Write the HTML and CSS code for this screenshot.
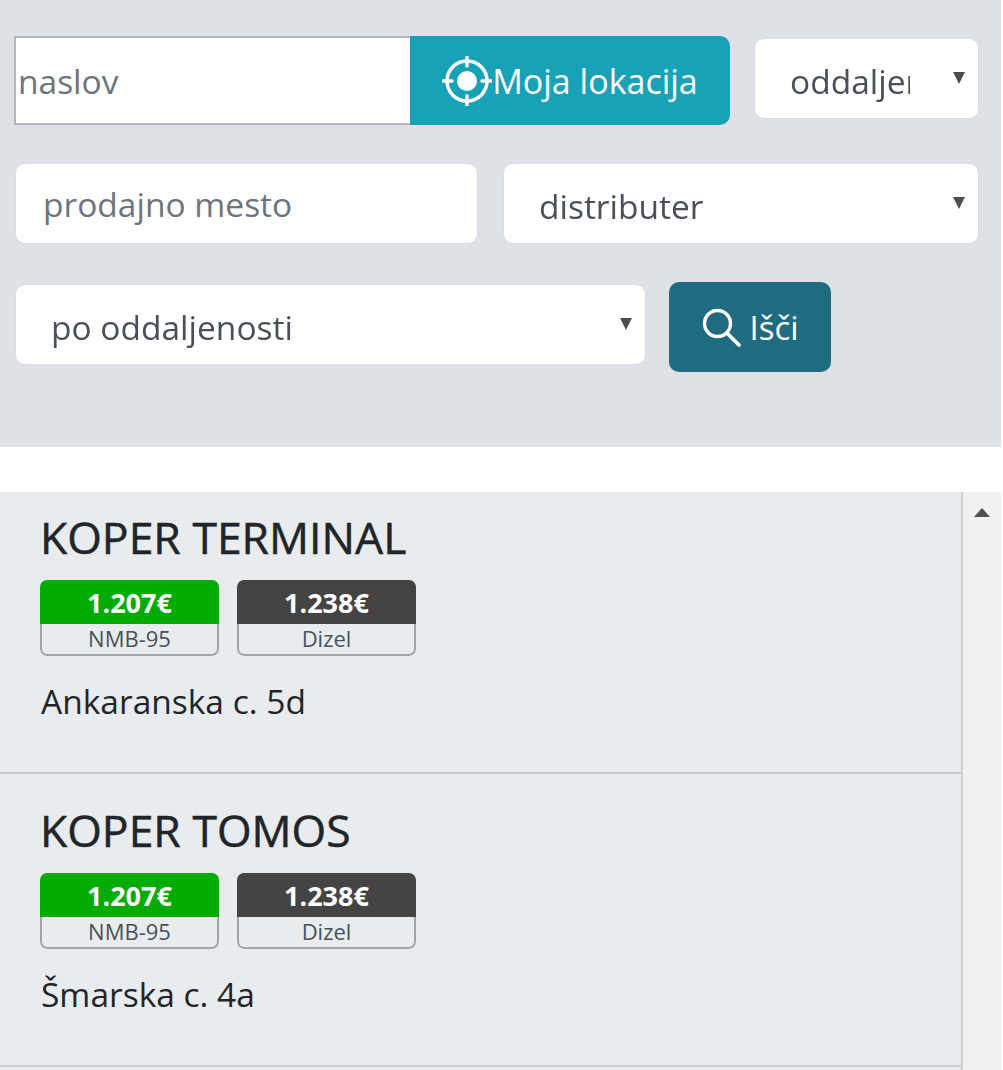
FILE: index.html
```html
<!DOCTYPE html>
<html lang="sl">
<head>
  <meta charset="UTF-8">
  <meta name="viewport" content="width=device-width, initial-scale=1.0">
  <title>Prodajna mesta</title>
  <link rel="stylesheet" href="styles.css">
</head>
<body>
  <form class="filters">
    <div class="filter-row row-address">
      <div class="address-group">
        <input class="address-input" type="text" placeholder="naslov">
        <button class="location-button" type="button">
          <svg class="location-icon" viewBox="0 0 50 50" width="50" height="50">
            <circle cx="25" cy="25" r="20" fill="none" stroke="#fff" stroke-width="3.5"/>
            <circle cx="25" cy="25" r="10" fill="#fff"/>
            <path d="M25 1v9M25 40v9M1 25h9M40 25h9" stroke="#fff" stroke-width="3.5" stroke-linecap="round"/>
          </svg>
          <span>Moja lokacija</span>
        </button>
      </div>
      <div class="select-wrap select-distance">
        <select class="field"><option>oddaljenost</option></select>
      </div>
    </div>

    <div class="filter-row row-place">
      <input class="field place-input" type="text" placeholder="prodajno mesto">
      <div class="select-wrap select-dealer">
        <select class="field"><option>distributer</option></select>
      </div>
    </div>

    <div class="filter-row row-sort">
      <div class="select-wrap select-sort">
        <select class="field"><option>po oddaljenosti</option></select>
      </div>
      <button class="search-button" type="submit">
        <svg viewBox="0 0 40 40" width="40" height="40">
          <circle cx="16.5" cy="16.5" r="13" fill="none" stroke="#fff" stroke-width="3.4"/>
          <path d="M26 26l12 12" stroke="#fff" stroke-width="3.8" stroke-linecap="round"/>
        </svg>
        <span>Išči</span>
      </button>
    </div>
  </form>

  <div class="results">
    <div class="station-list">
      <div class="station">
        <h2>KOPER TERMINAL</h2>
        <div class="prices">
          <div class="price price-petrol"><b>1.207€</b><span>NMB-95</span></div>
          <div class="price price-diesel"><b>1.238€</b><span>Dizel</span></div>
        </div>
        <p>Ankaranska c. 5d</p>
      </div>
      <div class="station">
        <h2>KOPER TOMOS</h2>
        <div class="prices">
          <div class="price price-petrol"><b>1.207€</b><span>NMB-95</span></div>
          <div class="price price-diesel"><b>1.238€</b><span>Dizel</span></div>
        </div>
        <p>Šmarska c. 4a</p>
      </div>
    </div>
    <div class="scrollbar"><div class="scroll-up"></div></div>
  </div>
</body>
</html>
```

FILE: styles.css
```css
:root {
  --panel: #dee2e6;
  --list: #e9ecef;
  --text: #212529;
  --muted: #495057;
  --placeholder: #6c757d;
}

* {
  box-sizing: border-box;
}

html, body {
  height: 100%;
}

body {
  margin: 0;
  background: #fff;
  color: var(--text);
  font-family: "Open Sans", "Noto Sans", sans-serif;
  overflow: hidden;
  filter: blur(0.5px);
}

.filters {
  width: 1001px;
  height: 447px;
  padding: 36px 22px 0 14px;
  background: var(--panel);
}

.filter-row {
  display: flex;
}

.row-address {
  align-items: flex-start;
  gap: 24px;
  height: 89px;
}

.row-place {
  gap: 25px;
  height: 81px;
  margin-top: 38px;
  padding-left: 1px;
}

.row-sort {
  align-items: flex-start;
  gap: 23px;
  margin-top: 40px;
  padding-left: 1px;
}

.address-group {
  display: flex;
  width: 716px;
  height: 89px;
}

.address-input {
  width: 396px;
  height: 100%;
  padding: 0 2px;
  border: 2px solid #b4b6b8;
  border-right: 0;
  background: #fff;
  color: var(--muted);
  font: inherit;
  font-size: 33.5px;
}

.location-button {
  display: flex;
  align-items: center;
  justify-content: center;
  width: 320px;
  height: 100%;
  padding: 0;
  border: 0;
  border-radius: 0 10px 10px 0;
  background: #17a2b8;
  color: #fff;
  font: inherit;
  font-size: 34px;
}

.location-icon {
  flex: none;
}

.field {
  width: 100%;
  height: 81px;
  border: 1px solid #d8dce0;
  border-radius: 10px;
  background: #fff;
  color: var(--muted);
  font: inherit;
  font-size: 33.5px;
  appearance: none;
}

input.field {
  padding: 0 27px;
}

select.field {
  padding: 4px 68px 0 35px;
}

input::placeholder {
  color: var(--placeholder);
  opacity: 1;
}

.place-input {
  width: 463px;
}

.select-wrap {
  position: relative;
}

.select-wrap::after {
  content: "";
  position: absolute;
  top: 34px;
  right: 14px;
  border: 6.5px solid transparent;
  border-top: 12px solid #4a4f54;
  border-bottom: 0;
}

.select-distance {
  width: 225px;
  margin-top: 2px;
}

.select-dealer {
  width: 476px;
}

.select-sort {
  width: 631px;
}

.search-button {
  display: flex;
  align-items: center;
  justify-content: center;
  gap: 8px;
  width: 162px;
  height: 90px;
  margin-top: -2px;
  padding: 0;
  border: 0;
  border-radius: 10px;
  background: #1f6b7f;
  color: #fff;
  font: inherit;
  font-size: 33px;
}

.results {
  display: flex;
  width: 1001px;
  height: 578px;
  margin-top: 45px;
  overflow: hidden;
}

.station-list {
  width: 961px;
  background: var(--list);
}

.station {
  height: 293px;
  padding: 27px 40px 0;
  border-bottom: 2px solid #c9cdd1;
}

.station:first-child {
  height: 282px;
  padding-top: 16px;
}

.station h2 {
  margin: 0;
  font-size: 44.5px;
  font-weight: 400;
  line-height: 58px;
  -webkit-text-stroke: 0.5px var(--text);
}

.prices {
  display: flex;
  gap: 18px;
  margin-top: 14px;
}

.price {
  width: 179px;
  height: 76px;
  border-radius: 7px;
  overflow: hidden;
  text-align: center;
}

.price b {
  display: block;
  height: 44px;
  color: #fff;
  font-size: 27px;
  line-height: 45px;
}

.price span {
  display: block;
  height: 32px;
  border: 2px solid #a2a5a8;
  border-top: 0;
  border-radius: 0 0 7px 7px;
  color: var(--muted);
  font-size: 22px;
  line-height: 29px;
}

.price-petrol b {
  background: #00ac00;
}

.price-diesel b {
  background: #444;
}

.station p {
  margin: 23px 0 0 1px;
  color: var(--text);
  font-size: 33.5px;
  line-height: 44px;
}

.scrollbar {
  width: 40px;
  border-left: 2px solid #cdcfd1;
  background: #f1f1f1;
}

.scroll-up {
  width: 0;
  margin: 16px 0 0 11px;
  border: 8.5px solid transparent;
  border-top: 0;
  border-bottom: 9px solid #505050;
}
```
